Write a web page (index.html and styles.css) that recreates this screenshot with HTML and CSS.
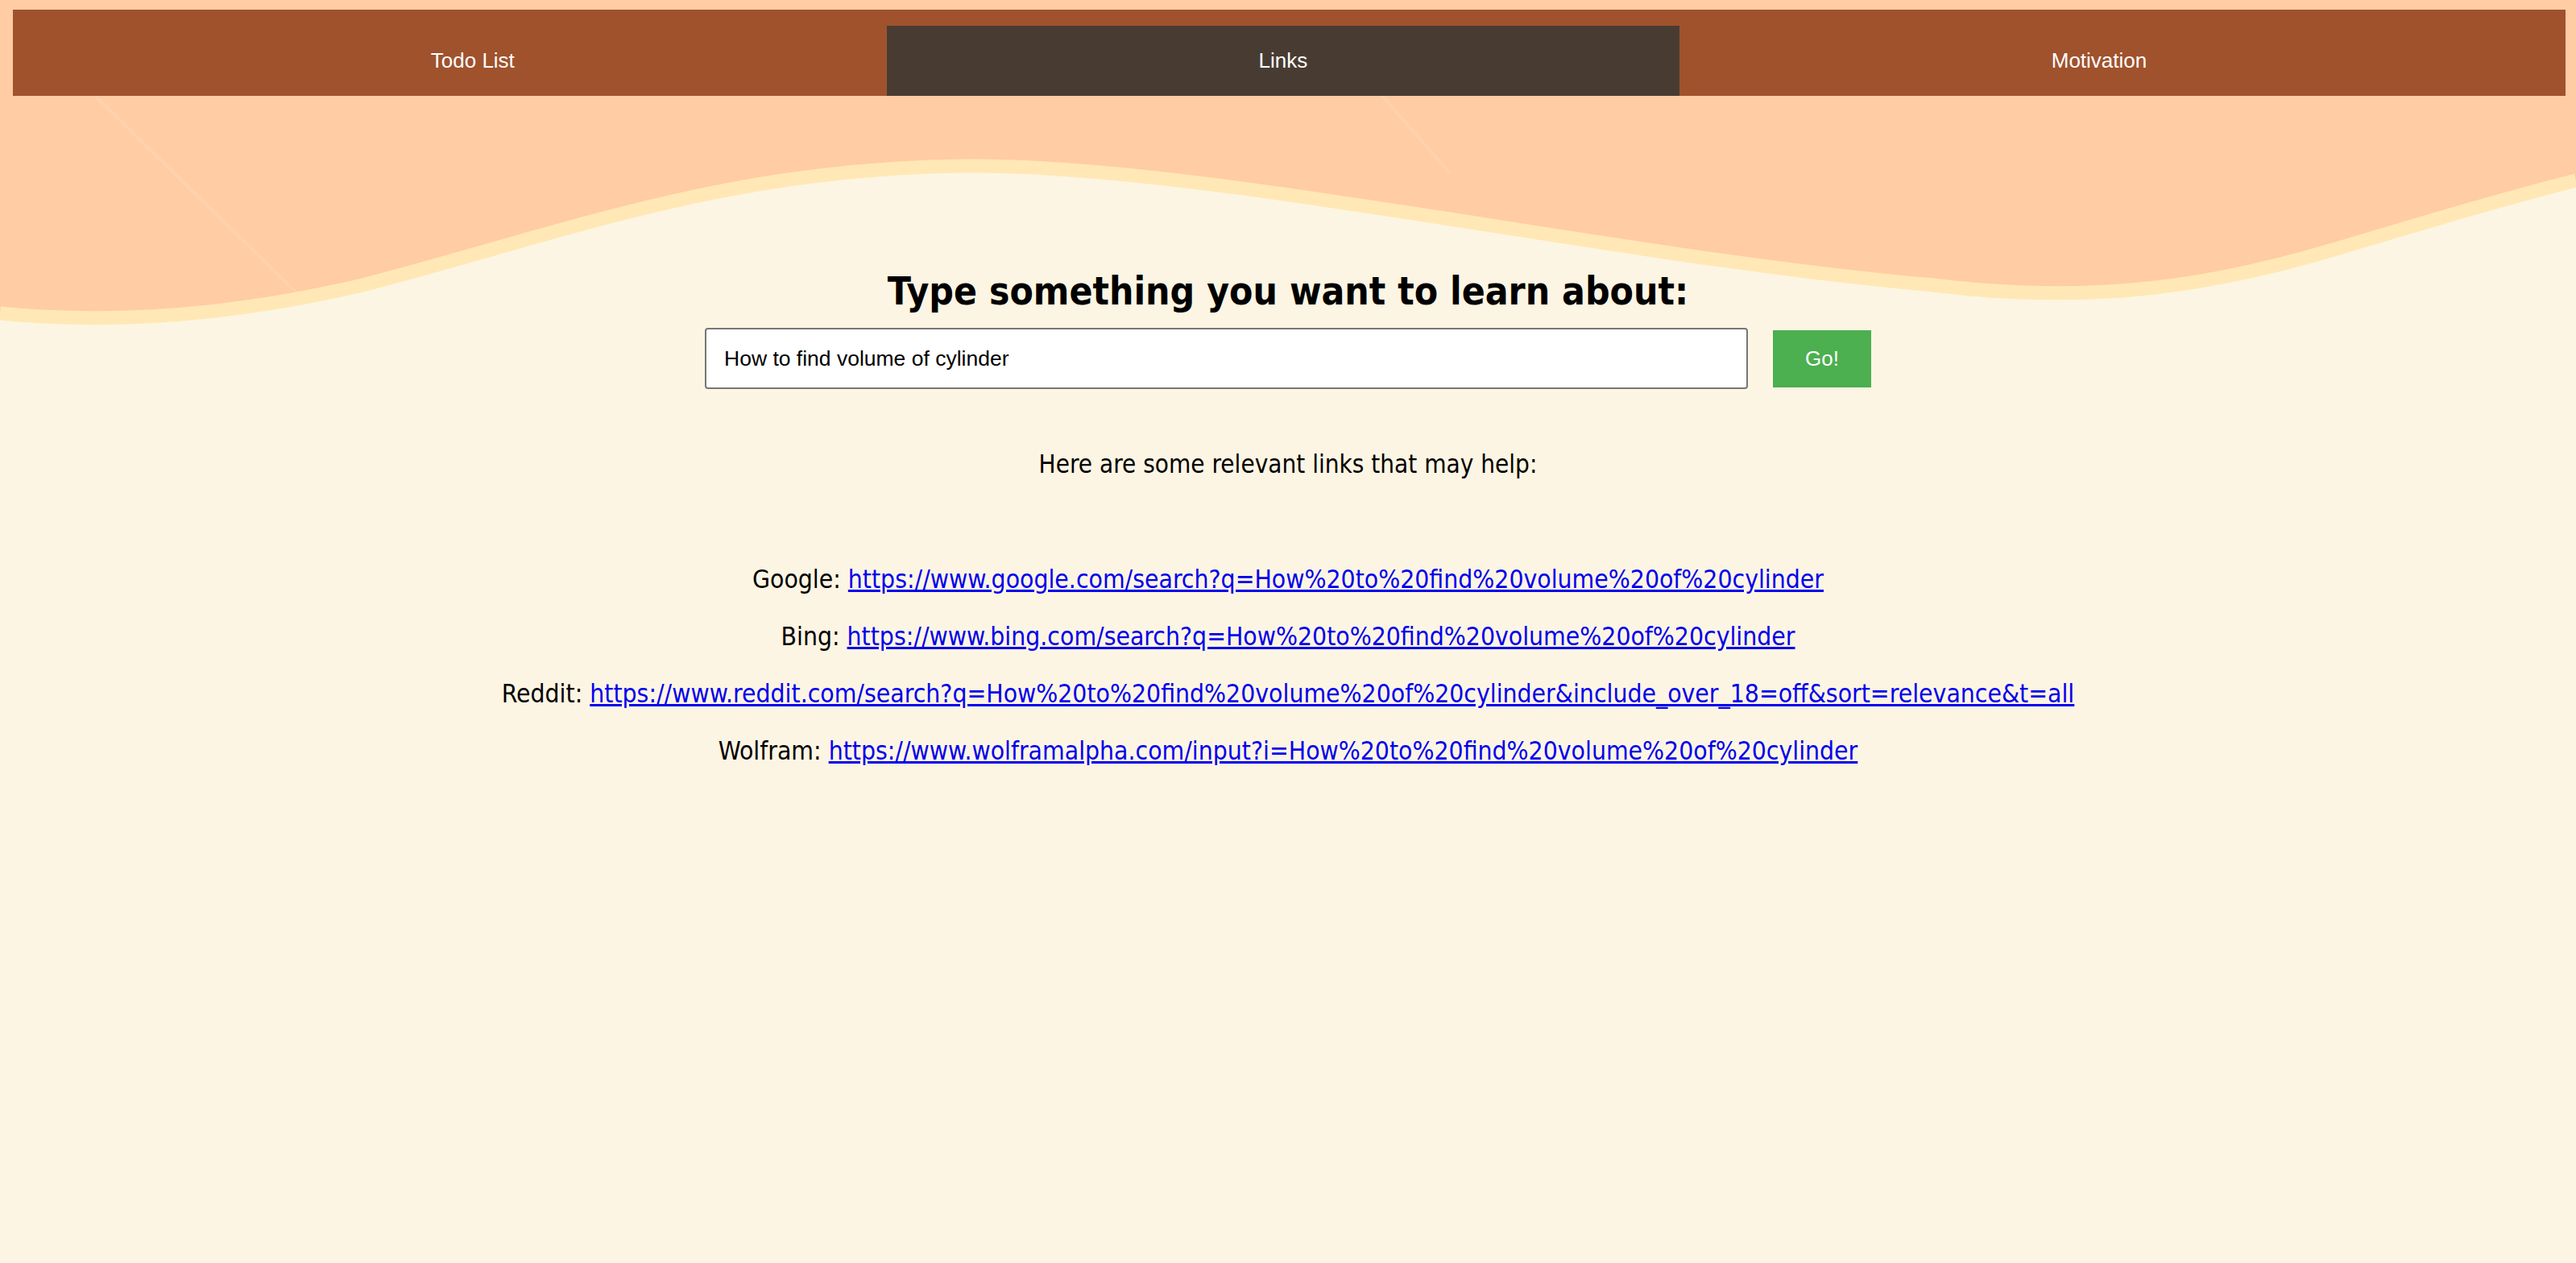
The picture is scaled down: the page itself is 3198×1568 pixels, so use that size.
FILE: index.html
```html
<!DOCTYPE html>
<html lang="en">
<head>
<meta charset="utf-8">
<title>Links</title>
<link rel="stylesheet" href="styles.css">
</head>
<body>
<svg class="bg-wave" width="3198" height="440" viewBox="0 0 3198 440" aria-hidden="true">
  <rect x="0" y="0" width="3198" height="440" fill="#FFCCA3"/>
  <path d="M119,120 L372,367" stroke="#FFD6B4" stroke-width="4" fill="none" opacity="0.6"/>
  <path d="M1715,118 L1800,215" stroke="#FFD6B4" stroke-width="4" fill="none" opacity="0.6"/>
  <path d="M0,389 C150,404 300,389 450,354 C700,289 900,209 1200,206 C1500,204 2000,319 2400,354 C2600,379 2750,354 2900,309 C3000,279 3100,249 3198,224 L3198,440 L0,440 Z" fill="#FDF5E3"/>
  <path d="M0,389 C150,404 300,389 450,354 C700,289 900,209 1200,206 C1500,204 2000,319 2400,354 C2600,379 2750,354 2900,309 C3000,279 3100,249 3198,224" fill="none" stroke="#FFE8B5" stroke-width="17"/>
</svg>
<div class="page">
  <nav class="nav">
    <a class="tab">Todo List</a>
    <a class="tab active">Links</a>
    <a class="tab">Motivation</a>
  </nav>
  <main class="content">
    <h2 class="title">Type something you want to learn about:</h2>
    <form class="search">
      <input class="search-input" type="text" value="How to find volume of cylinder">
      <button class="go" type="button">Go!</button>
    </form>
    <p class="intro">Here are some relevant links that may help:</p>
    <div class="links">
      <p class="link-row">Google: <a href="#">https://www.google.com/search?q=How%20to%20find%20volume%20of%20cylinder</a></p>
      <p class="link-row">Bing: <a href="#">https://www.bing.com/search?q=How%20to%20find%20volume%20of%20cylinder</a></p>
      <p class="link-row">Reddit: <a href="#">https://www.reddit.com/search?q=How%20to%20find%20volume%20of%20cylinder&amp;include_over_18=off&amp;sort=relevance&amp;t=all</a></p>
      <p class="link-row">Wolfram: <a href="#">https://www.wolframalpha.com/input?i=How%20to%20find%20volume%20of%20cylinder</a></p>
    </div>
  </main>
</div>
</body>
</html>
```
FILE: styles.css
```css
html, body {
  margin: 0;
  padding: 0;
}
body {
  background: #FDF5E3;
  min-height: 1568px;
  position: relative;
  font-family: "DejaVu Sans Condensed", "DejaVu Sans", sans-serif;
  font-stretch: condensed;
}
.bg-wave {
  position: absolute;
  top: 0;
  left: 0;
  z-index: 0;
  display: block;
}
.page {
  position: relative;
  z-index: 1;
  padding-top: 12px;
}
.nav {
  display: flex;
  margin: 0 13px 0 16px;
  padding: 20px 58px 0 57px;
  background: #A0522D;
}
.tab {
  flex: 1 1 auto;
  height: 87px;
  display: flex;
  align-items: center;
  justify-content: center;
  color: #ffffff;
  font-family: "Liberation Sans", Arial, sans-serif;
  font-stretch: normal;
  font-size: 26px;
  text-decoration: none;
}
.tab.active {
  background: #483C32;
}
.content {
  text-align: center;
  padding-top: 215px;
}
.title {
  margin: 0;
  font-size: 47.6px;
  line-height: 56px;
  font-weight: bold;
  color: #000;
}
.search {
  display: flex;
  justify-content: center;
  align-items: center;
  gap: 31px;
  margin-top: 17px;
}
.search-input {
  box-sizing: border-box;
  width: 1295px;
  height: 76px;
  border: 2px solid #767676;
  border-radius: 4px;
  padding: 0 22px;
  background: #fff;
  color: #000;
  font-family: "Liberation Sans", Arial, sans-serif;
  font-size: 26.5px;
}
.go {
  width: 122px;
  height: 71px;
  border: none;
  background: #4CAF50;
  color: #fff;
  font-family: "Liberation Sans", Arial, sans-serif;
  font-size: 26px;
  padding: 0;
}
.intro {
  margin: 74px 0 0;
  font-size: 31.2px;
  line-height: 39px;
  color: #000;
}
.links {
  margin-top: 104px;
}
.link-row {
  margin: 0 0 32px;
  font-size: 31.6px;
  line-height: 39px;
  color: #000;
}
.link-row a {
  color: #0000EE;
  text-decoration: underline;
}
```
